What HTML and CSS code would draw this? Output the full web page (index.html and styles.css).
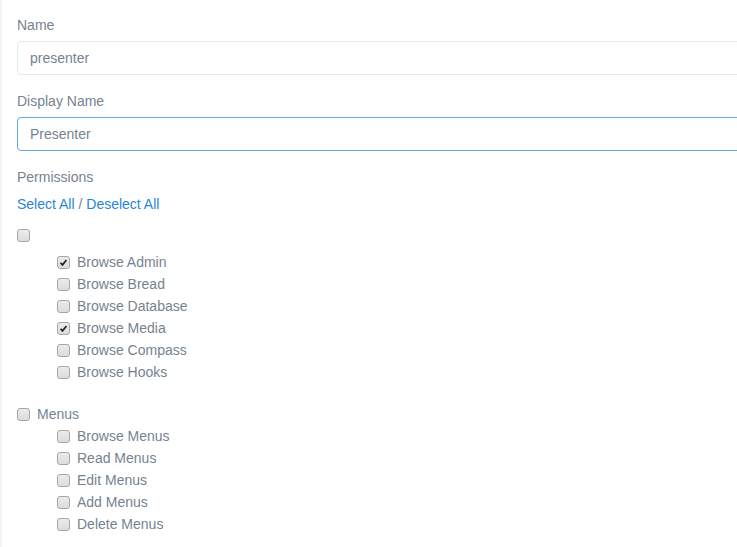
FILE: index.html
```html
<!DOCTYPE html>
<html>

<head>
  <meta charset="UTF-8">
  <title>Edit Role</title>
  <link rel="stylesheet" href="styles.css">
</head>

<body>
  <div class="panel">
    <div class="form-group">
      <label class="field-label">Name</label>
      <input class="form-control" type="text" value="presenter">
    </div>
    <div class="form-group">
      <label class="field-label">Display Name</label>
      <input class="form-control focused" type="text" value="Presenter">
    </div>

    <label class="field-label perms">Permissions</label>
    <div class="select-links">
      <a href="#">Select All</a> / <a href="#">Deselect All</a>
    </div>

    <ul class="permissions">
      <li class="group first">
        <div class="row"><span class="cb"></span></div>
        <ul class="children">
          <li class="row"><span class="cb checked"><svg viewBox="0 0 13 13"><path d="M3 6.8 L5.3 9.3 L10 3.6" fill="none" stroke="#222" stroke-width="2"/></svg></span>Browse Admin</li>
          <li class="row"><span class="cb"></span>Browse Bread</li>
          <li class="row"><span class="cb"></span>Browse Database</li>
          <li class="row"><span class="cb checked"><svg viewBox="0 0 13 13"><path d="M3 6.8 L5.3 9.3 L10 3.6" fill="none" stroke="#222" stroke-width="2"/></svg></span>Browse Media</li>
          <li class="row"><span class="cb"></span>Browse Compass</li>
          <li class="row"><span class="cb"></span>Browse Hooks</li>
        </ul>
      </li>
      <li class="group">
        <div class="row"><span class="cb"></span>Menus</div>
        <ul class="children">
          <li class="row"><span class="cb"></span>Browse Menus</li>
          <li class="row"><span class="cb"></span>Read Menus</li>
          <li class="row"><span class="cb"></span>Edit Menus</li>
          <li class="row"><span class="cb"></span>Add Menus</li>
          <li class="row"><span class="cb"></span>Delete Menus</li>
        </ul>
      </li>
    </ul>
  </div>
</body>

</html>
```

FILE: styles.css
```css
body {
  margin: 0;
  background-color: #fff;
  font-family: "Liberation Sans", Arial, sans-serif;
  font-size: 14px;
  line-height: 20px;
  color: #76838f;
  overflow: hidden;
}

.panel {
  border-left: 2px solid #f3f3f3;
  padding: 15px 0 0 15px;
  min-height: 547px;
  box-sizing: border-box;
}

.form-group {
  margin-bottom: 16px;
}

.field-label {
  display: block;
  margin-bottom: 6px;
}

.field-label.perms {
  margin-bottom: 7px;
}

.form-control {
  display: block;
  box-sizing: border-box;
  width: 740px;
  height: 34px;
  padding: 6px 12px;
  font-family: inherit;
  font-size: 14px;
  color: #76838f;
  background: #fff;
  border: 1px solid #e4eaec;
  border-radius: 4px;
  outline: none;
}

.form-control.focused {
  border-color: #62a8ea;
}

.select-links {
  color: #76838f;
}

.select-links a {
  color: #2a86d2;
  text-decoration: none;
}

.permissions,
.children {
  list-style: none;
  margin: 0;
  padding: 0;
}

.permissions {
  margin-top: 10px;
}

.group {
  margin-bottom: 20px;
}

.group.first .children {
  margin-top: 5px;
}

.children {
  padding-left: 40px;
}

.row {
  display: flex;
  align-items: center;
  height: 22px;
}

.cb {
  width: 13px;
  height: 13px;
  box-sizing: border-box;
  border: 1px solid #a6a6a6;
  border-radius: 3px;
  background: linear-gradient(#ececec, #dcdcdc);
  margin-right: 7px;
  flex-shrink: 0;
}

.cb svg {
  display: block;
  width: 11px;
  height: 11px;
}
```
